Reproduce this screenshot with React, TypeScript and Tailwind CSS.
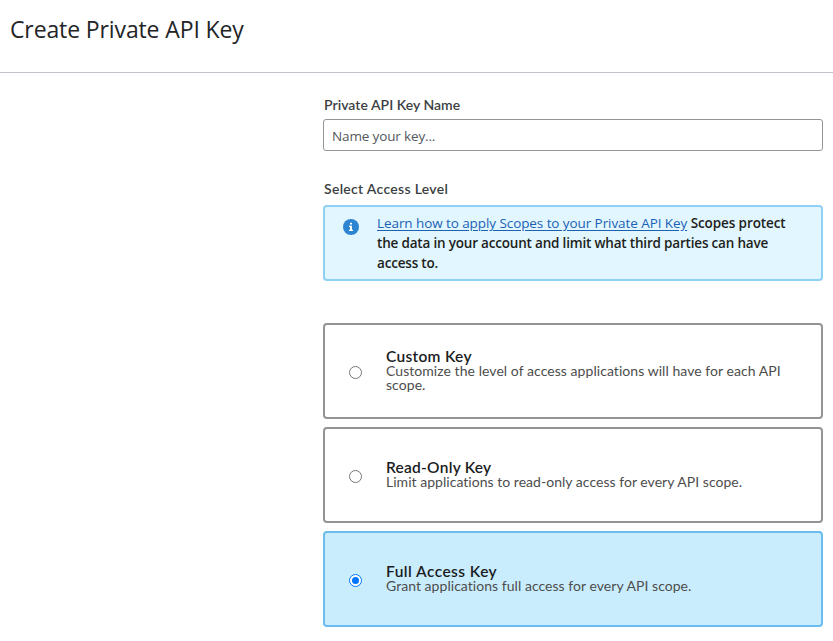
type Level = { title: string; description: string; titleClass: string; descriptionClass: string };

const levels: Level[] = [
  {
    title: "Custom Key",
    description: "Customize the level of access applications will have for each API scope.",
    titleClass: "tracking-[0.3px]",
    descriptionClass: "tracking-[0.055px]",
  },
  {
    title: "Read-Only Key",
    description: "Limit applications to read-only access for every API scope.",
    titleClass: "tracking-[0.25px]",
    descriptionClass: "tracking-[0.03px]",
  },
  {
    title: "Full Access Key",
    description: "Grant applications full access for every API scope.",
    titleClass: "tracking-[0.45px]",
    descriptionClass: "tracking-[0.04px]",
  },
];

function Radio({ checked }: { checked: boolean }) {
  return (
    <span
      role="radio"
      aria-checked={checked}
      className={
        checked
          ? "flex size-[13px] shrink-0 items-center justify-center rounded-full border border-[#0075ff] bg-white"
          : "flex size-[13px] shrink-0 rounded-full border border-[#767676] bg-white"
      }
    >
      {checked && <span className="size-[7px] shrink-0 rounded-full bg-[#0075ff]" />}
    </span>
  );
}

function InfoIcon() {
  return (
    <svg className="mt-[12px] ml-[18px] size-[16px] shrink-0" viewBox="0 0 16 16">
      <circle cx="8" cy="8" r="8" fill="#2d84d0" />
      <path d="M7 3.8h2v1.8H7zM6 6.8h3v4h1V12H6v-1.200h1V8H6z" fill="#fff" />
    </svg>
  );
}

export default function App() {
  return (
    <div className="h-[641px] w-[833px] overflow-hidden bg-white font-['Lato',sans-serif]">
      <header className="flex h-[73px] items-start border-b border-[#c1c5cb] pt-[13px] pl-[10px]">
        <h1 className="font-['Open_Sans',sans-serif] text-[23px] leading-[32px] font-normal tracking-[-0.12px] whitespace-nowrap text-[#232426]">
          Create Private API Key
        </h1>
      </header>
      <main className="ml-[323px] flex w-[500px] flex-col">
        <label className="mt-[24px] pl-px text-[14px] leading-[16px] font-semibold text-[#3b3f42]">
          <span className="tracking-[0.03px]">Private API Key Name</span>
        </label>
        <div className="mt-[6px] flex h-[32px] items-center rounded-[3px] border border-[#949596] pt-[2px] pl-[8px] font-['Open_Sans',sans-serif] text-[13.500px] text-[#54575b]">
          <span className="tracking-[-0.14px]">Name your key...</span>
        </div>
        <div className="mt-[30px] pl-px text-[14px] leading-[16px] font-semibold text-[#3b3f42]">
          <span className="tracking-[0.3px]">Select Access Level</span>
        </div>
        <section className="mt-[8px] flex h-[76px] rounded-[4px] border-2 border-[#8fd0f5] bg-[#e1f6fe]">
          <InfoIcon />
          <div className="mt-[6px] ml-[18px] font-['Open_Sans',sans-serif] text-[13.500px] leading-[20px] font-semibold whitespace-nowrap text-[#1d1e20]">
            <p>
              <a className="font-normal tracking-[-0.08px] text-[#1b62b5] underline underline-offset-2">Learn how to apply Scopes to your Private API Key</a>{" "}
              <span className="tracking-[-0.1px]">Scopes protect</span>
            </p>
            <p className="tracking-[-0.19px]">the data in your account and limit what third parties can have</p>
            <p className="tracking-[-0.19px]">access to.</p>
          </div>
        </section>
        <div role="radiogroup" className="mt-[42px] flex flex-col gap-2">
          {levels.map((level, index) => (
            <div
              key={level.title}
              className={
                index === 2
                  ? "flex h-[96px] items-center rounded-[4px] border-2 border-[#6bbdf0] bg-[#caedfe] pl-[24px]"
                  : "flex h-[96px] items-center rounded-[4px] border-2 border-[#949494] bg-white pl-[24px]"
              }
            >
              <div className="mt-[2px] flex">
                <Radio checked={index === 2} />
              </div>
              <div className="mb-[2px] ml-[24px] w-[412px]">
                <h2 className="text-[15.500px] leading-[15px] font-semibold text-[#1b1c1e]">
                  <span className={level.titleClass}>{level.title}</span>
                </h2>
                <p className="text-[14px] leading-[14px] text-[#4d4d4d]">
                  <span className={level.descriptionClass}>{level.description}</span>
                </p>
              </div>
            </div>
          ))}
        </div>
      </main>
    </div>
  );
}
